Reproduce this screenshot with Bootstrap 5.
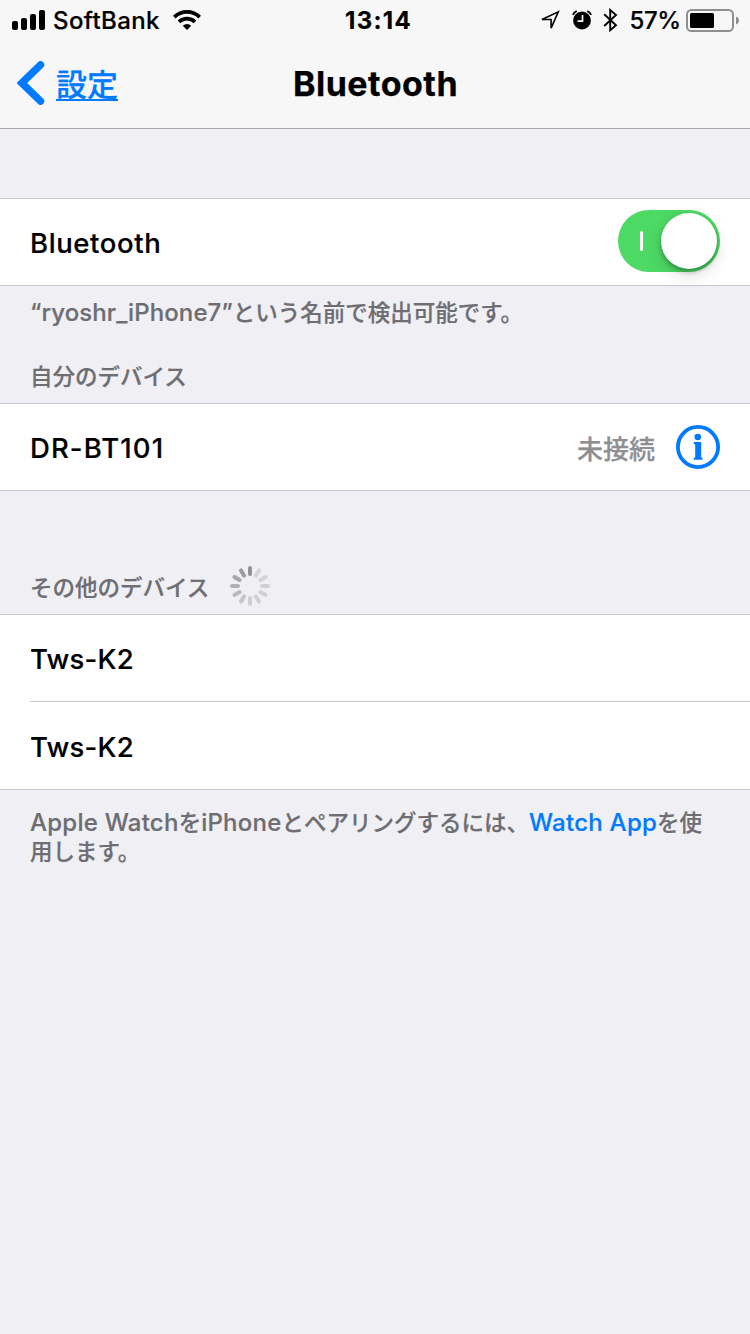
<!DOCTYPE html>
<html lang="ja">
<head>
<meta charset="utf-8">
<meta name="viewport" content="width=device-width, initial-scale=1">
<title>Bluetooth</title>
<link href="https://cdn.jsdelivr.net/npm/bootstrap@5.3.0/dist/css/bootstrap.min.css" rel="stylesheet">
<style>
  body { background:#efeff4; color:#000; font-family:Inter,"Noto Sans CJK JP",sans-serif; font-weight:500; min-height:1334px; overflow-x:hidden; }
  .topbar { background:#f7f7f7; height:129px; border-bottom:1px solid #a7a7aa; }
  .status { height:40px; font-size:24px; line-height:40px; padding-left:12px; padding-right:11px; }
  .side { flex:1 1 0; }
  .carrier { letter-spacing:.4px; margin-left:7px; margin-right:13px; }
  .status .carrier, .pct, .clock { padding-top:2px; -webkit-text-stroke:.2px currentColor; }
  .pct { letter-spacing:-.5px; margin-left:12px; margin-right:5.5px; }
  .clock { font-weight:700; letter-spacing:1.3px; margin-left:6px; }
  .titlebar { height:88px; line-height:88px; padding-left:17px; padding-right:16px; }
  .titlebar h1 { font-size:34px; font-weight:700; line-height:88px; letter-spacing:.5px; -webkit-text-stroke:.25px #000; }
  .back { color:#007aff; font-size:31px; text-decoration:none; margin-top:-2px; }
  .back-text { margin-left:11px; line-height:38px; border-bottom:2px solid #007aff; height:35px; margin-top:1px; -webkit-text-stroke:.25px #007aff; }
  .cells { border-top:1px solid #c8c7cc; border-bottom:1px solid #c8c7cc; }
  .cell { background:#fff; height:86px; padding:4px 30px 0; font-size:27.5px; -webkit-text-stroke:.2px currentColor; }
  .inset-line { height:1px; background:#c8c7cc; margin-left:30px; }
  .w-bt { letter-spacing:.6px; }
  .w-dr { letter-spacing:1.1px; }
  .w-tws { letter-spacing:.25px; }
  .ink { color:#6d6d72; }
  .note { font-size:24px; line-height:29px; padding:0 30px; white-space:nowrap; letter-spacing:.25px; -webkit-text-stroke:.2px currentColor; }
  .jp { font-size:22.5px; letter-spacing:0; }
  .snug { letter-spacing:.1px; }
  .snug .jp { font-size:22.5px; }
  .state { color:#8e8e93; font-size:26px; margin-right:21px; -webkit-text-stroke:.25px #8e8e93; }
  .watch { color:#007aff; text-decoration:none; }
  .toggle { width:102px; height:62px; border-radius:31px; background:#4cd964; margin-top:-7px; padding:3px 3px 3px 22px; }
  .toggle .tick { width:3px; height:20px; border-radius:2px; background:#fff; }
  .toggle .knob { width:56px; height:56px; border-radius:50%; background:#fff; box-shadow:0 6px 16px rgba(0,0,0,.15), 0 3px 4px rgba(0,0,0,.25); }
  svg { display:block; flex:none; }
</style>
</head>
<body>
<header class="topbar">
  <div class="status d-flex align-items-center">
    <div class="side d-flex align-items-center">
      <svg width="34" height="20" viewBox="0 0 34 20"><rect x="0" y="11" width="6" height="9" rx="2"/><rect x="9" y="8" width="6" height="12" rx="2"/><rect x="18" y="4" width="6" height="16" rx="2"/><rect x="27" y="0" width="6" height="20" rx="2"/></svg>
      <span class="carrier">SoftBank</span>
      <svg width="28" height="20" viewBox="0 0 28 20"><g fill="none" stroke="#000" stroke-width="3.7"><path d="M1.3 7.1a18.2 18.2 0 0 1 25.4 0"/><path d="M6 11.9a11.5 11.5 0 0 1 16 0"/></g><path d="M14 20l-4.2-4.2a6 6 0 0 1 8.4 0z"/></svg>
    </div>
    <span class="clock">13:14</span>
    <div class="side d-flex align-items-center justify-content-end">
      <svg width="20" height="20" viewBox="0 0 20 20"><path d="M2 9.5L18.3 1.8l-7.2 16.3V9.5z" fill="none" stroke="#000" stroke-width="1.6"/></svg>
      <svg style="margin-left:12px" width="20" height="20" viewBox="0 0 20 20"><circle cx="10" cy="10.5" r="8.9"/><path d="M.8 4.8A7 7 0 0 1 4.8 1.2M19.2 4.8A7 7 0 0 0 15.2 1.2" fill="none" stroke="#000" stroke-width="1.8"/><path d="M10.5 5v6.2h-5" fill="none" stroke="#f7f7f7" stroke-width="1.7"/></svg>
      <svg style="margin-left:11px" width="15" height="24" viewBox="0 0 15 24"><path d="M1.2 6.2L13 17.2l-5.8 5V2l5.8 5L1.2 18" fill="none" stroke="#000" stroke-width="1.9"/></svg>
      <span class="pct">57%</span>
      <svg width="53" height="24" viewBox="0 0 53 24"><rect x="1" y="2" width="46" height="21" rx="4.5" fill="none" stroke="#8f8f8f" stroke-width="2"/><rect x="4" y="5" width="24" height="15" rx="1.5"/><path d="M50 8.5q3 1.2 3 4t-3 4z" fill="#8f8f8f"/></svg>
    </div>
  </div>
  <div class="titlebar d-flex align-items-center">
    <div class="side">
      <a class="back d-flex align-items-center" href="#"><svg width="28" height="44" viewBox="0 0 28 44"><path d="M23.5 3.8L4.8 22l18.7 18.2" fill="none" stroke="#007aff" stroke-width="7.4" stroke-linecap="round" stroke-linejoin="miter"/></svg><span class="back-text">設定</span></a>
    </div>
    <h1 class="m-0">Bluetooth</h1>
    <div class="side"></div>
  </div>
</header>
<main>
  <div style="height:69px"></div>
  <div class="cells">
    <div class="cell d-flex align-items-center justify-content-between">
      <span class="w-bt">Bluetooth</span>
      <div class="toggle d-flex align-items-start justify-content-between"><span class="tick align-self-center"></span><span class="knob"></span></div>
    </div>
  </div>
  <p class="note snug ink mb-0" style="padding-top:12px">“ryoshr_iPhone7”<span class="jp">という名前で検出可能です。</span></p>
  <h2 class="note ink jp mb-0" style="height:76px;padding-top:35px">自分のデバイス</h2>
  <div class="cells">
    <div class="cell d-flex align-items-center">
      <span class="me-auto w-dr">DR-BT101</span>
      <span class="state">未接続</span>
      <svg width="44" height="44" viewBox="0 0 44 44" style="margin-top:-5px"><circle cx="22" cy="22" r="20.1" fill="none" stroke="#007aff" stroke-width="3.8"/><circle cx="21.8" cy="12" r="3.3" fill="#007aff"/><path d="M17.8 17h7.4v15.4h1.2v2.3h-8.6v-2.3h1.4V19.3h-1.4z" fill="#007aff"/></svg>
    </div>
  </div>
  <div class="d-flex align-items-start" style="height:123px;padding-top:75px">
    <h2 class="note ink jp mb-0 pe-0" style="padding-top:7px">その他のデバイス</h2>
    <svg style="margin-left:21px" width="40" height="40" viewBox="-20 -20 40 40"><g stroke-width="4" stroke-linecap="round">
      <path d="M0-12V-18" stroke="#929296"/><path d="M0-12V-18" stroke="#d4d4d9" transform="rotate(30)"/><path d="M0-12V-18" stroke="#d2d2d7" transform="rotate(60)"/><path d="M0-12V-18" stroke="#d0d0d5" transform="rotate(90)"/><path d="M0-12V-18" stroke="#d0d0d5" transform="rotate(120)"/><path d="M0-12V-18" stroke="#d0d0d5" transform="rotate(150)"/><path d="M0-12V-18" stroke="#cfcfd4" transform="rotate(180)"/><path d="M0-12V-18" stroke="#c5c5ca" transform="rotate(210)"/><path d="M0-12V-18" stroke="#bababf" transform="rotate(240)"/><path d="M0-12V-18" stroke="#b0b0b4" transform="rotate(270)"/><path d="M0-12V-18" stroke="#a6a6aa" transform="rotate(300)"/><path d="M0-12V-18" stroke="#9c9ca0" transform="rotate(330)"/></g></svg>
  </div>
  <div class="cells bg-white">
    <div class="cell d-flex align-items-center"><span class="w-tws">Tws-K2</span></div>
    <div class="inset-line"></div>
    <div class="cell d-flex align-items-center" style="height:87px"><span class="w-tws">Tws-K2</span></div>
  </div>
  <p class="note ink mb-0" style="padding-top:18px">Apple Watch<span class="jp">を</span>iPhone<span class="jp">とペアリングするには、</span><a class="watch" href="#">Watch App</a><span class="jp">を使<br>用します。</span></p>
</main>
<script src="https://cdn.jsdelivr.net/npm/bootstrap@5.3.0/dist/js/bootstrap.bundle.min.js"></script>
</body>
</html>
